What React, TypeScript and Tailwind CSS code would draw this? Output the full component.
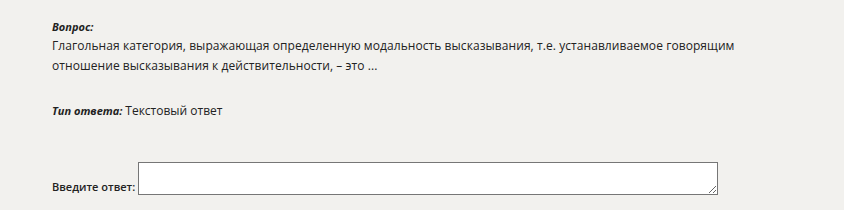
import React from "react";

export default function App() {
  return (
    <div
      className="w-[844px] h-[210px] bg-[#f2f1ee] text-[#222] overflow-hidden"
      style={{ fontFamily: '"Open Sans", "Noto Sans", sans-serif' }}
    >
      <div className="pl-[52px] pt-[19px] w-[800px]">
        <div className="text-[11px] leading-[16px] font-bold italic">Вопрос:</div>
        <div className="text-[12px] leading-[20px] pt-[1px] tracking-[0.07px]">
          Глагольная категория, выражающая определенную модальность высказывания, т.е. устанавливаемое говорящим
          <br />
          отношение высказывания к действительности, – это ...
        </div>
        <div className="mt-[25px] text-[11px] leading-[20px]">
          <span className="font-bold italic">Тип ответа:</span> <span className="text-[12px]">Текстовый ответ</span>
        </div>
        <div className="mt-[41px] flex items-end">
          <span className="text-[11px] font-semibold leading-[16px] mr-[3px]">Введите ответ:</span>
          <textarea className="w-[580px] h-[33px] bg-white border border-[#767676] resize-y block" />
        </div>
      </div>
    </div>
  );
}
